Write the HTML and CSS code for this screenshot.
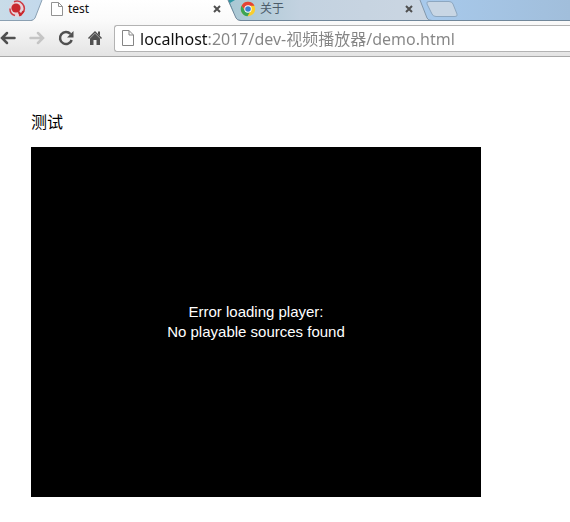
FILE: index.html
```html
<!DOCTYPE html>
<html lang="zh-CN">
<head>
<meta charset="utf-8">
<title>test</title>
<link rel="stylesheet" href="styles.css">
</head>
<body>
<header class="browser">
  <nav class="tabs" aria-label="Tabs">
    <svg class="tab-shapes" width="460" height="21" viewBox="0 0 460 21" aria-hidden="true">
      <defs>
        <linearGradient id="pin" x2="1"><stop offset="0" stop-color="#c9dce8"/><stop offset="1" stop-color="#c3d9ec"/></linearGradient>
        <linearGradient id="idle" x2="1"><stop offset="0" stop-color="#a9c8d4"/><stop offset=".35" stop-color="#c3d2e0"/><stop offset="1" stop-color="#cbd6e2"/></linearGradient>
        <linearGradient id="active" x2="0" y2="1"><stop offset="0" stop-color="#fff"/><stop offset="1" stop-color="#fafafa"/></linearGradient>
      </defs>
      <path d="M0 0H42L35 18Q34 20 31 20H0Z" fill="url(#pin)"/>
      <path d="M226 0H237L234 13Z" fill="#3199a5"/>
      <path d="M235 0H420L427 18Q428 20 431 20H240Q237 20 236 18L230 3Z" fill="url(#idle)"/>
      <path d="M420 0L427 18Q428 20.500 432 20.500" fill="none" stroke="#8297aa"/>
      <path d="M42 0L35 18Q34 20 31 21H241Q237 20 236 18L228 0Z" fill="url(#active)"/>
      <path d="M0 20.500H31Q34 20 35 18L42 0" fill="none" stroke="#8ba0b2"/>
      <path d="M228 0L236 18Q237 20.500 241 20.500H432" fill="none" stroke="#71879a"/>
      <path d="M429 1.500H449Q452 1.500 453 4L457 14Q458 16.500 455 16.500H436Q433 16.500 432 14L427 4Q426 1.500 429 1.500Z" fill="#c8d6e4" stroke="#8da7c0"/>
    </svg>
    <a class="tab pinned" href="#" aria-label="Pinned tab">
      <svg width="18" height="18" viewBox="0 0 18 18" aria-hidden="true"><circle cx="9" cy="9" r="8" fill="#e6d3da"/><circle cx="8" cy="8" r="4.600" fill="#c8282e"/><path d="M6 1.800A7.300 7.300 0 0 1 15 12.500M2 8.500A7 7 0 0 0 7 15.500" fill="none" stroke="#cc3a42" stroke-width="1.500"/><path d="M10.500 12L13.500 15.500M11 15.500Q14.500 14 15.500 11" fill="none" stroke="#c8282e" stroke-width="2.200"/></svg>
    </a>
    <div class="tab current">
      <svg width="12" height="14" viewBox="0 0 12 14" aria-hidden="true"><path d="M.5.500H7.500L11.500 4.500V13.500H.5ZM7.500.500V4.500H11.500" fill="#fff" stroke="#929292"/></svg>
      <a href="#">test</a>
      <button class="close" aria-label="关闭 test"><svg width="8" height="8" viewBox="0 0 8 8"><path d="M1 1L7 7M7 1L1 7"/></svg></button>
    </div>
    <div class="tab other">
      <svg width="16" height="16" viewBox="0 0 16 16" aria-hidden="true"><circle cx="8" cy="8" r="7.200" fill="#f9ce2e"/><path d="M1.500 5A7.200 7.200 0 0 1 14.500 4.800H8L5 9Z" fill="#e34236"/><path d="M1.500 4.800A7.200 7.200 0 0 0 7.500 15.200L10.500 10 5 9.500Z" fill="#3ba456"/><circle cx="8" cy="8" r="3.700" fill="#fff"/><circle cx="8" cy="8" r="2.800" fill="#397ed0"/></svg>
      <a href="#">关于</a>
      <button class="close" aria-label="关闭 关于"><svg width="8" height="8" viewBox="0 0 8 8"><path d="M1 1L7 7M7 1L1 7"/></svg></button>
    </div>
    <button class="new-tab" aria-label="新标签页"></button>
  </nav>
  <div class="toolbar">
    <div class="nav-buttons">
      <button aria-label="后退"><svg width="16" height="16" viewBox="0 0 16 16"><path d="M14.500 8H2.500M7 3L2 8L7 13" fill="none" stroke="#505050" stroke-width="2.500" stroke-linecap="round"/></svg></button>
      <button aria-label="前进"><svg width="16" height="16" viewBox="0 0 16 16"><path d="M1.500 8H13.500M9 3L14 8L9 13" fill="none" stroke="#c5c5c5" stroke-width="2.500" stroke-linecap="round"/></svg></button>
      <button aria-label="重新加载"><svg width="16" height="16" viewBox="0 0 16 16"><path d="M12.500 4A6 6 0 1 0 13.700 10" fill="none" stroke="#505050" stroke-width="2.500"/><path d="M15.500 1V7.500H9Z" fill="#505050"/></svg></button>
      <button aria-label="主页"><svg width="16" height="16" viewBox="0 0 16 16"><path d="M8 3.500L13 8.500V15H9.500V10H6.500V15H3V8.500Z" fill="#505050"/><path d="M1.500 8.500L8 2L14.500 8.500" fill="none" stroke="#505050" stroke-width="1.500"/><path d="M11 1.500H13V6L11 4Z" fill="#505050"/></svg></button>
    </div>
    <div class="address">
      <svg width="13" height="16" viewBox="0 0 13 16" aria-hidden="true"><path d="M1.500 .500H8L12.500 5V15.500H1.500ZM8 .500V5H12.500" fill="#fff" stroke="#858585"/></svg>
      <input type="text" aria-label="地址" value="localhost:2017/dev-视频播放器/demo.html" spellcheck="false">
    </div>
  </div>
</header>
<main>
  <p>测试</p>
  <section class="player" aria-label="Player">
    <div role="alert">Error loading player:<br>No playable sources found</div>
  </section>
</main>
</body>
</html>
```
FILE: styles.css
```css
* { box-sizing: border-box; }
body {
  margin: 0;
  background: #fff;
  color: #000;
  font-family: "Noto Sans", "Noto Sans CJK SC", sans-serif;
}
button { padding: 0; border: 0; background: none; }
a { color: inherit; text-decoration: none; }
svg { display: block; flex: none; }

.tabs {
  position: relative;
  display: flex;
  height: 21px;
  background: linear-gradient(90deg, #a7c9eb 75%, #a1bedb);
  border-bottom: 1px solid #71879a;
  font-size: 12px;
  line-height: 18px;
}
.tab-shapes { position: absolute; left: 0; top: 0; }
.tab {
  position: relative;
  display: flex;
  align-items: center;
  gap: 5px;
  height: 18px;
}
.pinned { width: 51px; padding-left: 8px; }
.current { width: 170px; color: #111; }
.other { width: 173px; margin-left: 19px; color: #4c5c6a; gap: 4px; }
.close { margin-left: auto; }
.close path { fill: none; stroke: #505050; stroke-width: 2; }
.new-tab { position: relative; width: 30px; margin-left: 14px; }

.toolbar {
  display: flex;
  align-items: center;
  gap: 11px;
  height: 36px;
  padding-bottom: 1px;
  background: linear-gradient(#fafafa, #e4e4e4);
  border-bottom: 1px solid #a8a8a8;
}
.nav-buttons { display: flex; gap: 13px; }
.nav-buttons button { width: 16px; height: 16px; }
.address {
  display: flex;
  flex: 1;
  align-items: center;
  gap: 6px;
  height: 27px;
  padding-left: 6px;
  background: #fff;
  border: 1px solid #b3b3b3;
  border-right: 0;
  border-radius: 3px 0 0 3px;
}
.address input {
  flex: 1;
  min-width: 0;
  height: 25px;
  padding: 0;
  border: 0;
  outline: 0;
  background: linear-gradient(90deg, #111 68px, #858585 68px);
  background-clip: text;
  color: transparent;
  font: 16px "Noto Sans", "Noto Sans CJK SC", sans-serif;
}

main { padding: 52px 89px 25px 31px; }
main p {
  margin: 0 0 13px;
  font: 16px/25px "Noto Sans CJK SC", sans-serif;
}
.player {
  display: grid;
  place-items: center;
  aspect-ratio: 9 / 7;
  background: #000;
  color: #fff;
  font: 15px/20px "Liberation Sans", sans-serif;
  text-align: center;
}
```
